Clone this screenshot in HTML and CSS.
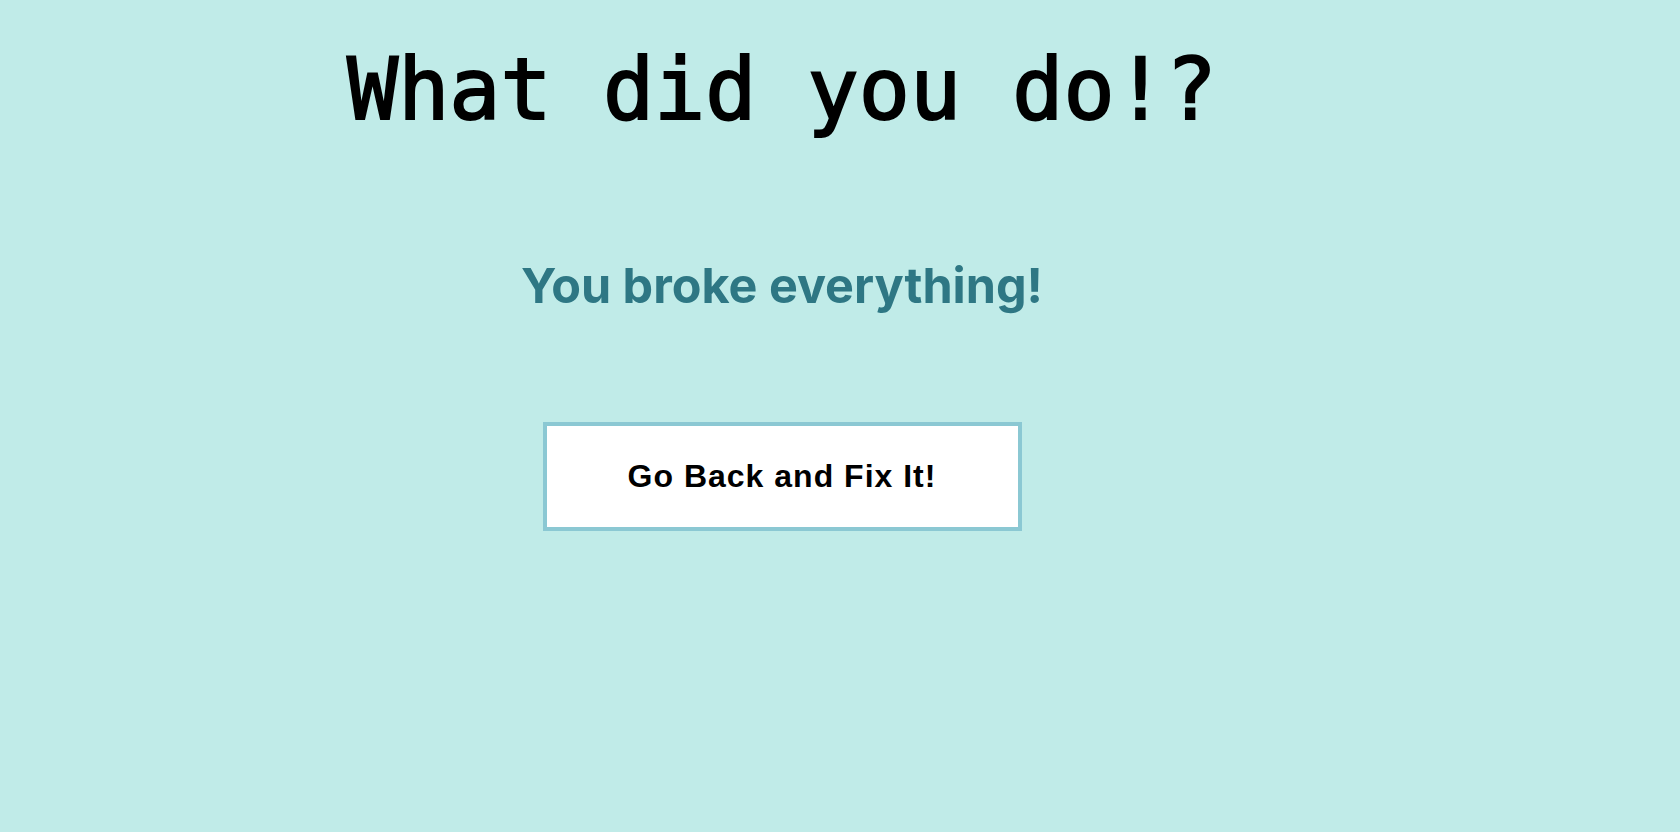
FILE: index.html
```html
<!DOCTYPE html>
<html lang="en">
<head>
<meta charset="utf-8">
<title>What did you do!?</title>
<link rel="stylesheet" href="styles.css">
</head>
<body>
<main class="page">
  <h1 class="title">What did you do!?</h1>
  <h2 class="subtitle">You broke everything!</h2>
  <button class="fix-button" type="button">Go Back and Fix It!</button>
</main>
</body>
</html>
```

FILE: styles.css
```css
html, body {
  margin: 0;
  padding: 0;
  background: #c0ebe8;
}

.page {
  width: 1564px;
  height: 832px;
  display: flex;
  flex-direction: column;
  align-items: center;
  box-sizing: border-box;
  padding-top: 40px;
}

.title {
  margin: 0;
  font-family: "DejaVu Sans Mono", monospace;
  font-weight: normal;
  font-size: 85px;
  line-height: normal;
  color: #000;
  -webkit-text-stroke: 2px #000;
}

.subtitle {
  margin: 117px 0 0;
  font-family: "Inter", "Noto Sans", sans-serif;
  font-weight: 700;
  font-size: 48.5px;
  line-height: normal;
  color: #2e7784;
}

.fix-button {
  margin-top: 107px;
  width: 479px;
  height: 109px;
  box-sizing: border-box;
  background: #ffffff;
  border: 4px solid #8bc8d3;
  font-family: "Liberation Sans", Arial, sans-serif;
  font-weight: 700;
  font-size: 32px;
  letter-spacing: 1px;
  color: #000;
  padding: 0;
  cursor: pointer;
}
```
